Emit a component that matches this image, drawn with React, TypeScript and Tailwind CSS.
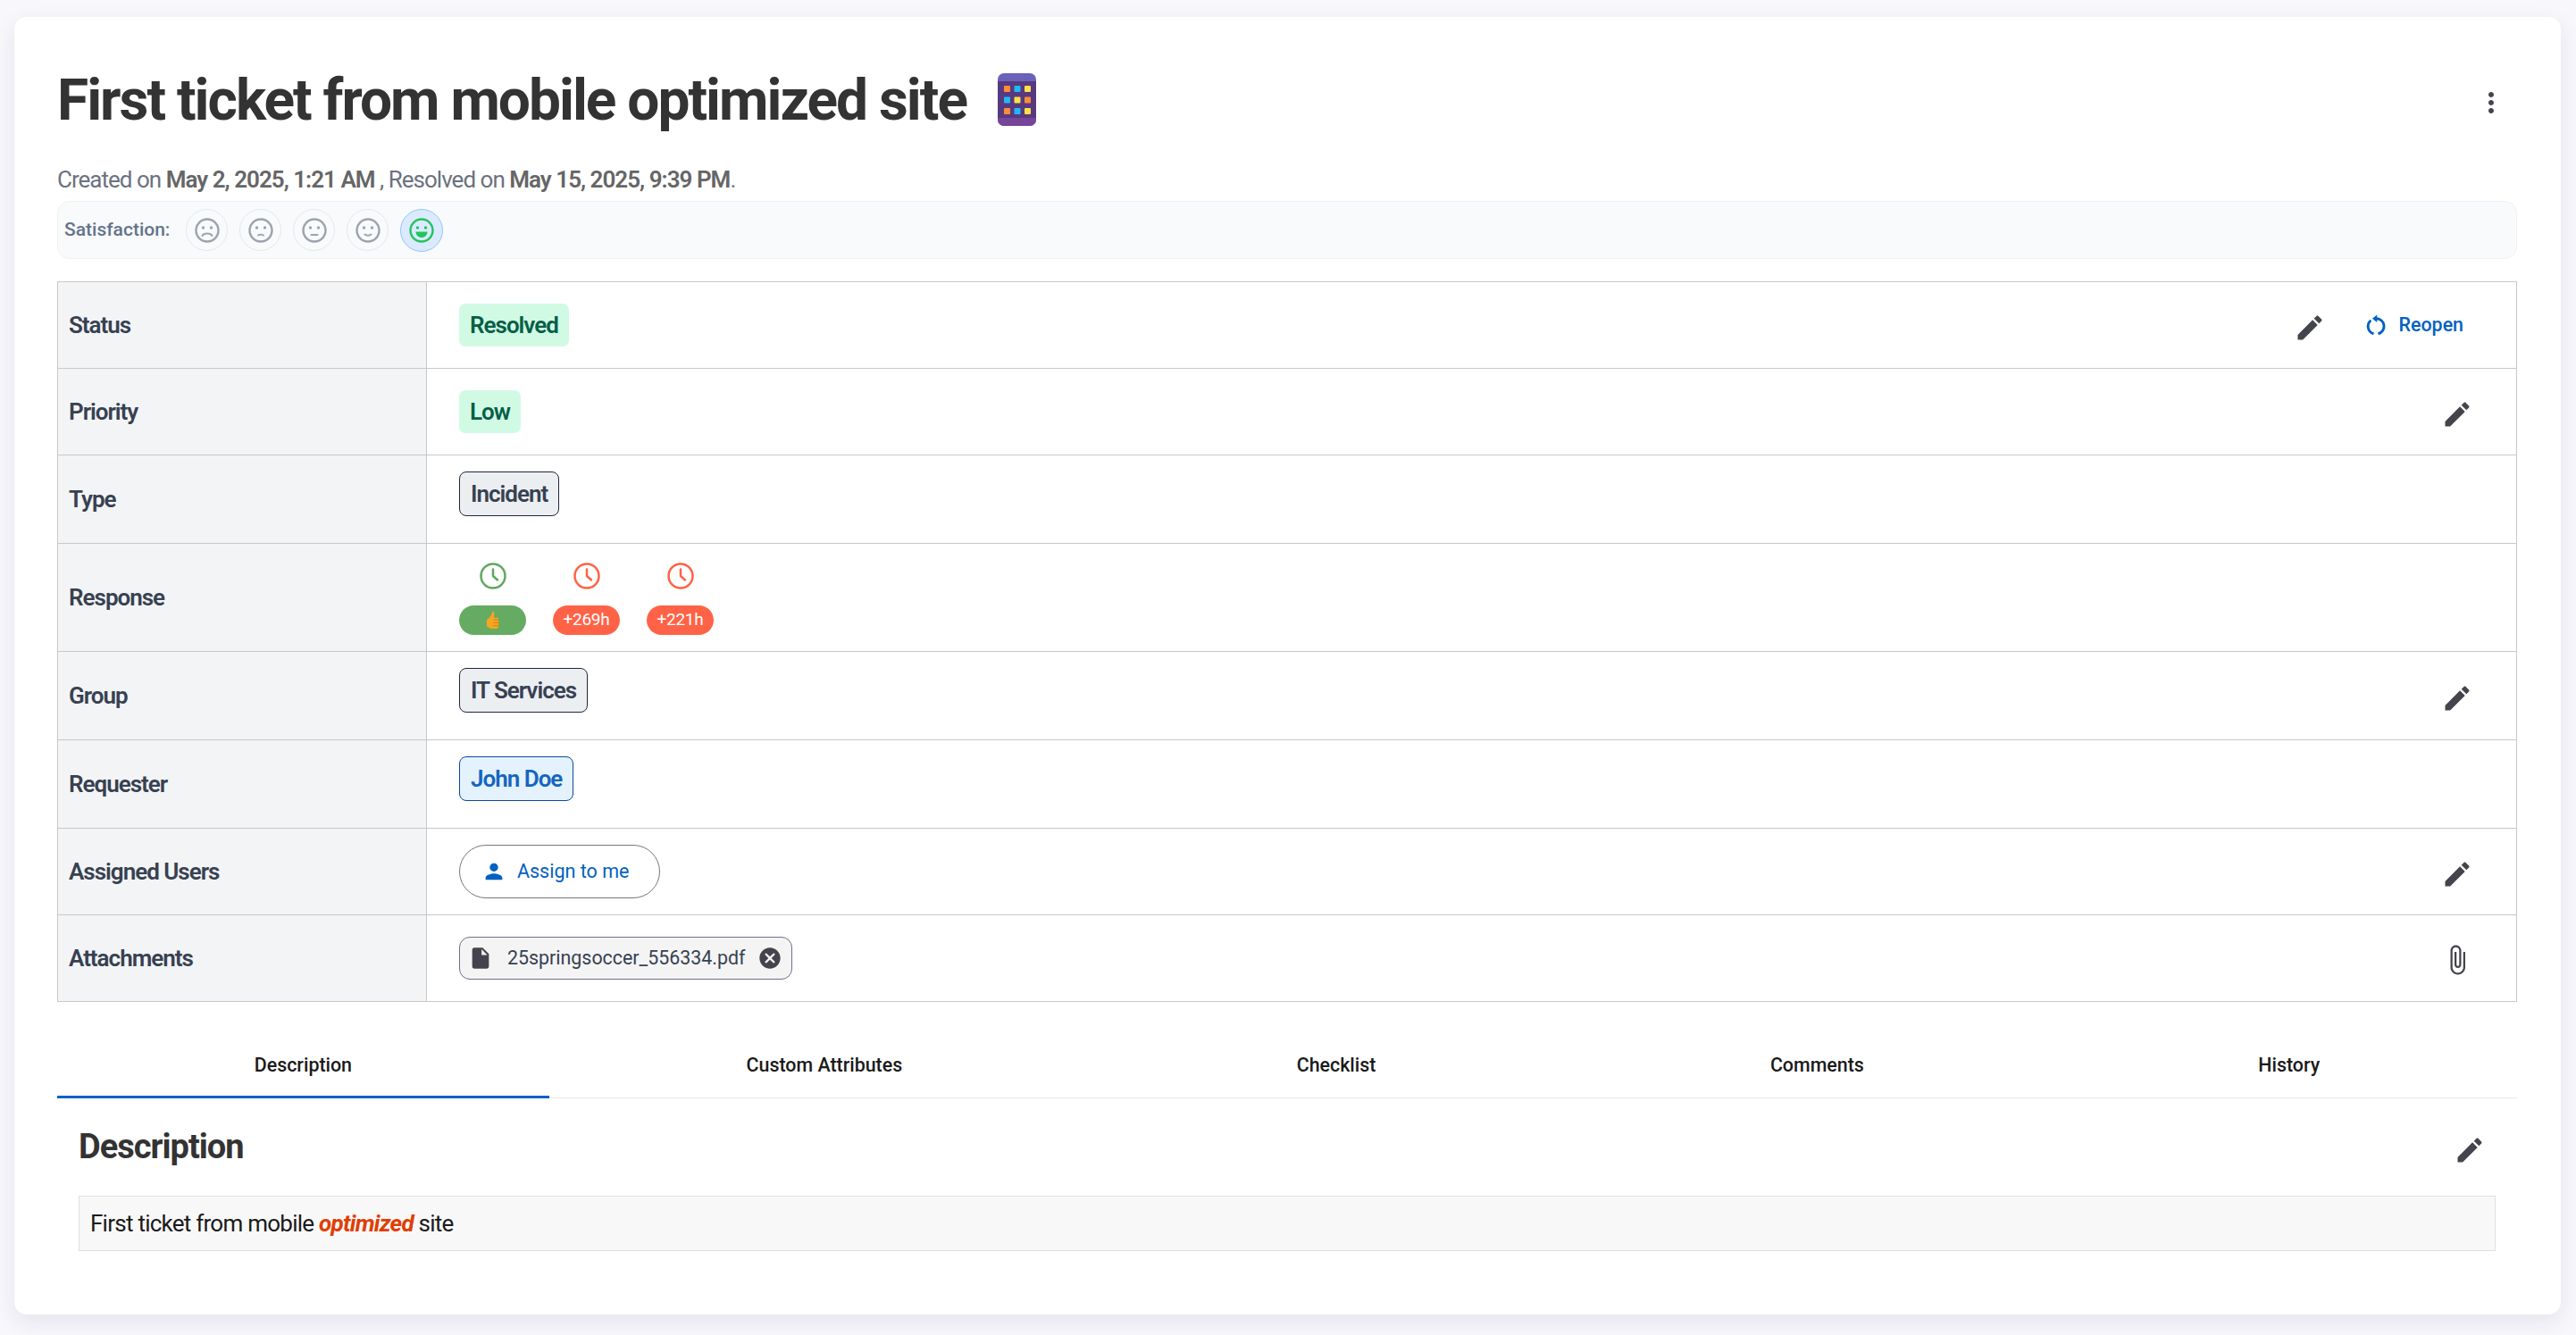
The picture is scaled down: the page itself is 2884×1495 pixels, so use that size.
const EDIT = 'M3 17.25V21h3.75L17.81 9.94l-3.75-3.75L3 17.25zM20.71 7.04c.39-.39.39-1.02 0-1.41l-2.34-2.34c-.39-.39-1.02-.39-1.41 0l-1.83 1.83 3.75 3.75 1.83-1.83z';

function MuiIcon({ d, className }: { d: string; className: string }) {
  return (
    <svg viewBox="0 0 24 24" fill="currentColor" className={className}>
      <path d={d} />
    </svg>
  );
}

function Edit({ className = '' }: { className?: string }) {
  return <MuiIcon d={EDIT} className={`h-9 w-9 shrink-0 text-[#44444c] ${className}`} />;
}

// the purple phone-like emoji next to the title
function TitleEmoji() {
  const rows = [
    ['#fb8c3c', '#22b8f5', '#fde047'],
    ['#22b8f5', '#fde047', '#fb8c3c'],
    ['#fb8c3c', '#22b8f5', '#fde047'],
  ];
  return (
    <svg viewBox="0 0 43 59" className="ml-[35px] h-[59px] w-[43px] shrink-0">
      <rect width="43" height="59" rx="7" fill="#6a62b8" />
      <path d="M0 50h43v2a7 7 0 0 1-7 7H7a7 7 0 0 1-7-7z" fill="#76459a" />
      <rect y="9" width="43" height="41" fill="#57397f" />
      {rows.map((row, r) =>
        row.map((c, i) => <rect key={`${r}-${i}`} x={7 + i * 11.5} y={14 + r * 12.5} width="7" height="7" rx="1" fill={c} />),
      )}
    </svg>
  );
}

function Face({ mouth, active }: { mouth: string; active?: boolean }) {
  const color = active ? '#22c55e' : '#9ca3af';
  return (
    <span
      className={
        active
          ? 'flex h-[48px] w-[48px] items-center justify-center rounded-full border border-[#93c5fd] bg-[#dbeafe]'
          : 'flex h-[47px] w-[47px] items-center justify-center rounded-full border border-[#e5e7eb] bg-[#f9fafb]'
      }
    >
      <svg viewBox="0 0 28 28" className="h-[28px] w-[28px]">
        <circle cx="14" cy="14" r="12.5" fill="none" stroke={color} strokeWidth="2.4" />
        <circle cx="9.5" cy="11" r="1.7" fill={color} />
        <circle cx="18.5" cy="11" r="1.7" fill={color} />
        {active ? <path d={mouth} fill={color} /> : <path d={mouth} fill="none" stroke={color} strokeWidth="2" strokeLinecap="round" />}
      </svg>
    </span>
  );
}

function Clock({ color }: { color: string }) {
  return (
    <svg viewBox="0 0 30 30" className="h-[30px] w-[30px]" fill="none" stroke={color} strokeWidth="2.5" strokeLinecap="round" strokeLinejoin="round">
      <circle cx="15" cy="15" r="13.5" />
      <path d="M15 7.5V15l5 4.5" />
    </svg>
  );
}

function Thumb() {
  return (
    <svg viewBox="0 0 14 20" className="h-[19px] w-[15px]">
      <path d="M7.5 0c1.4 0 1.7 1.4 1.5 3L8.6 7h3.4c1.2 0 2 .8 2 2v8c0 1.7-1.3 3-3 3H6c-1.6 0-3-.6-4-1.5L0 17v-6c0-1 .5-1.8 1.4-2.5C4 6.3 6 3.5 6.3 1 6.4.3 6.9 0 7.5 0z" fill="#f5a623" />
      <path d="M8 9.5h6M8 13h6M8 16.500h6" stroke="#e07b00" strokeWidth="1" />
    </svg>
  );
}

function Reopen() {
  return (
    <svg viewBox="0 0 24 24" className="mr-[11px] h-[30px] w-[30px]" fill="none" stroke="currentColor" strokeWidth="2.3">
      <path d="M12.500 6.200a6.900 6.900 0 0 1 1.500 13.600" />
      <path d="M10 19.800A6.900 6.900 0 0 1 7.500 7.800" />
      <path d="M13 2.800 8.800 6.200 13 9.600z" fill="currentColor" stroke="none" />
    </svg>
  );
}

function Row({ label, h, children, right }: { label: string; h: string; children: React.ReactNode; right?: React.ReactNode }) {
  return (
    <div className={`flex border-b border-[#c8c8c8] last:border-b-0 ${h}`}>
      <div className="flex w-[413px] shrink-0 items-center border-r border-[#c8c8c8] bg-[#f3f4f6] pl-[12px] text-[26px] font-semibold tracking-[-1px] text-[#374151]">
        {label}
      </div>
      <div className="flex min-w-0 flex-1 items-center justify-between pl-[36px] pr-[48px]">
        <div>{children}</div>
        {right}
      </div>
    </div>
  );
}

const TABS = ['Description', 'Custom Attributes', 'Checklist', 'Comments', 'History'];

export default function App() {
  return (
    <div className="min-h-[1495px] bg-[#f7f7fc] pb-[23px] pl-[16px] pr-[17px] pt-[19px] font-['Roboto',sans-serif]">
      <div className="h-[1453px] rounded-[14px] bg-white pl-[48px] pr-[49px] shadow-[0_8px_24px_rgba(30,30,60,0.09)]">
        {/* Title */}
        <div className="flex h-[122px] items-end">
          <div className="flex flex-1 items-end">
            <h1 className="-mb-[1px] text-[64px] font-bold leading-[59px] tracking-[-2px] text-[#333333]">First ticket from mobile optimized site</h1>
            <TitleEmoji />
          </div>
          <MuiIcon
            d="M12 8c1.1 0 2-.9 2-2s-.9-2-2-2-2 .9-2 2 .9 2 2 2zm0 2c-1.100 0-2 .9-2 2s.9 2 2 2 2-.9 2-2-.9-2-2-2zm0 6c-1.100 0-2 .9-2 2s.9 2 2 2 2-.9 2-2-.9-2-2-2z"
            className="mb-[8px] mr-[11px] h-9 w-9 text-[#44444c]"
          />
        </div>

        <p className="mt-[44px] text-[26px] leading-[32px] tracking-[-0.98px] text-[#6b7280]">
          Created on <b className="font-semibold text-[#666666]">May 2, 2025, 1:21 AM</b> , Resolved on{' '}
          <b className="font-semibold text-[#666666]">May 15, 2025, 9:39 PM</b>.
        </p>

        {/* Satisfaction */}
        <div className="mt-[8px] flex h-[65px] items-center gap-[18px] rounded-[14px] border border-[#f0f1f3] bg-[#f9fafb] pl-[7px]">
          <span className="text-[21px] font-medium text-[#64748b]">Satisfaction:</span>
          <div className="flex items-center gap-[13px]">
            <Face mouth="M8.500 20c1.500-3.500 9.500-3.500 11 0" />
            <Face mouth="M11 19.500c1.500-1 4.500-1 6 0" />
            <Face mouth="M10.500 19h7" />
            <Face mouth="M10.500 18.500c1.500 1.500 5.500 1.500 7 0" />
            <Face mouth="M7.500 15.500h13c0 4-3 6.500-6.500 6.500s-6.500-2.500-6.500-6.500z" active />
          </div>
        </div>

        {/* Fields */}
        <div className="mt-[25px] border border-[#c8c8c8]">
          <Row
            label="Status"
            h="h-[97px]"
            right={
              <div className="mr-[11px] flex items-center">
                <Edit className="mt-[6px]" />
                <span className="ml-[41px] flex items-center text-[21.4px] font-medium text-[#0061c0]">
                  <Reopen />
                  Reopen
                </span>
              </div>
            }
          >
            <span className="inline-block rounded-[7px] bg-[#d1fae5] px-[12px] text-[26px] font-semibold leading-[48px] tracking-[-1px] text-[#065f46]">Resolved</span>
          </Row>
          <Row label="Priority" h="h-[97px]" right={<Edit className="mt-[6px]" />}>
            <span className="inline-block rounded-[7px] bg-[#d1fae5] px-[12px] text-[26px] font-semibold leading-[48px] tracking-[-1px] text-[#065f46]">Low</span>
          </Row>
          <Row label="Type" h="h-[99px]">
            <span className="mb-[12px] inline-block rounded-[8px] border border-[#1f2937] bg-[#eceff2] px-[12px] text-[26px] font-semibold leading-[48px] tracking-[-1px] text-[#374151]">Incident</span>
          </Row>
          <Row label="Response" h="h-[121px]">
            <div className="mt-[3px] flex gap-[30px]">
              {[
                { color: '#5fa95f', bg: 'bg-[#66ab62]', text: null },
                { color: '#ff6347', bg: 'bg-[#ff6347]', text: '+269h' },
                { color: '#ff6347', bg: 'bg-[#ff6347]', text: '+221h' },
              ].map((item, i) => (
                <div key={i} className="flex w-[75px] flex-col items-center gap-[18px]">
                  <Clock color={item.color} />
                  <span className={`flex h-[33px] w-full items-center justify-center rounded-full text-[19px] tracking-[-0.3px] text-white ${item.bg}`}>
                    {item.text ?? <Thumb />}
                  </span>
                </div>
              ))}
            </div>
          </Row>
          <Row label="Group" h="h-[99px]" right={<Edit className="mt-[6px]" />}>
            <span className="mb-[12px] inline-block rounded-[8px] border border-[#1f2937] bg-[#eceff2] px-[12px] text-[26px] font-semibold leading-[48px] tracking-[-1px] text-[#374151]">IT Services</span>
          </Row>
          <Row label="Requester" h="h-[99px]">
            <span className="mb-[12px] inline-block rounded-[8px] border border-[#0d47a1] bg-[#e3f2fd] px-[12px] text-[26px] font-semibold leading-[48px] tracking-[-1px] text-[#1565c0]">John Doe</span>
          </Row>
          <Row label="Assigned Users" h="h-[97px]" right={<Edit className="mt-[6px]" />}>
            <span className="flex h-[60px] w-[225px] items-center rounded-full border border-[#79747e] pl-[24px] text-[21.5px] font-normal text-[#0061c0]">
              <MuiIcon
                d="M12 12c2.210 0 4-1.790 4-4s-1.790-4-4-4-4 1.790-4 4 1.790 4 4 4zm0 2c-2.670 0-8 1.340-8 4v2h16v-2c0-2.660-5.330-4-8-4z"
                className="mr-[12px] h-[28px] w-[28px]"
              />
              Assign to me
            </span>
          </Row>
          <Row
            label="Attachments"
            h="h-[96px]"
            right={
              <MuiIcon
                d="M16.500 6v11.500c0 2.210-1.790 4-4 4s-4-1.790-4-4V5c0-1.380 1.120-2.500 2.500-2.500s2.500 1.120 2.500 2.500v10.500c0 .55-.45 1-1 1s-1-.45-1-1V6H10v9.500c0 1.380 1.120 2.500 2.500 2.500s2.500-1.120 2.500-2.500V5c0-2.210-1.790-4-4-4S7 2.790 7 5v12.500c0 3.040 2.460 5.500 5.500 5.500s5.500-2.460 5.500-5.500V6h-1.500z"
                className="mt-[4px] h-9 w-9 shrink-0 text-[#44444c]"
              />
            }
          >
            <span className="flex h-[48px] w-[373px] items-center rounded-[12px] border border-[#6b7280] bg-[#f4f4f5] pl-[9px] pr-[10px] text-[21.4px] text-[#374151]">
              <MuiIcon d="M14 2H6c-1.100 0-2 .9-2 2v16c0 1.100.9 2 2 2h12c1.100 0 2-.9 2-2V8l-6-6zm-1 7V3.500L18.500 9H13z" className="mr-[16px] h-[28px] w-[28px] shrink-0 text-[#44444c]" />
              25springsoccer_556334.pdf
              <MuiIcon
                d="M12 2C6.470 2 2 6.470 2 12s4.470 10 10 10 10-4.470 10-10S17.530 2 12 2zm5 13.590L15.590 17 12 13.410 8.410 17 7 15.590 10.590 12 7 8.410 8.410 7 12 10.590 15.590 7 17 8.410 13.410 12 17 15.590z"
                className="ml-auto h-[28px] w-[28px] shrink-0 text-[#44444c]"
              />
            </span>
          </Row>
        </div>

        {/* Tabs */}
        <div className="mt-[38px] flex h-[70px] border-b border-[#e5e7eb]">
          {TABS.map((tab, i) => (
            <div
              key={tab}
              className={`flex flex-auto items-center justify-center text-[21.4px] font-medium text-[#1a1a1a] ${i === 0 ? '-mb-[1px] border-b-[3px] border-[#0061c0]' : 'pb-[3px]'}`}
            >
              {tab}
            </div>
          ))}
        </div>

        {/* Description */}
        <div className="px-[24px]">
          <div className="flex h-[109px] items-center justify-between pr-[11px]">
            <h2 className="text-[38px] font-bold tracking-[-1px] text-[#333333]">Description</h2>
            <Edit className="mt-[6px]" />
          </div>
          <div className="flex h-[62px] items-center border border-[#e0e0e0] bg-[#f8f8f8] pl-[12px] text-[26px] tracking-[-0.75px] text-[#1a1a1a]">
            <span>
              First ticket from mobile <b className="font-bold italic text-[#e03e00]">optimized</b> site
            </span>
          </div>
        </div>
      </div>
    </div>
  );
}
